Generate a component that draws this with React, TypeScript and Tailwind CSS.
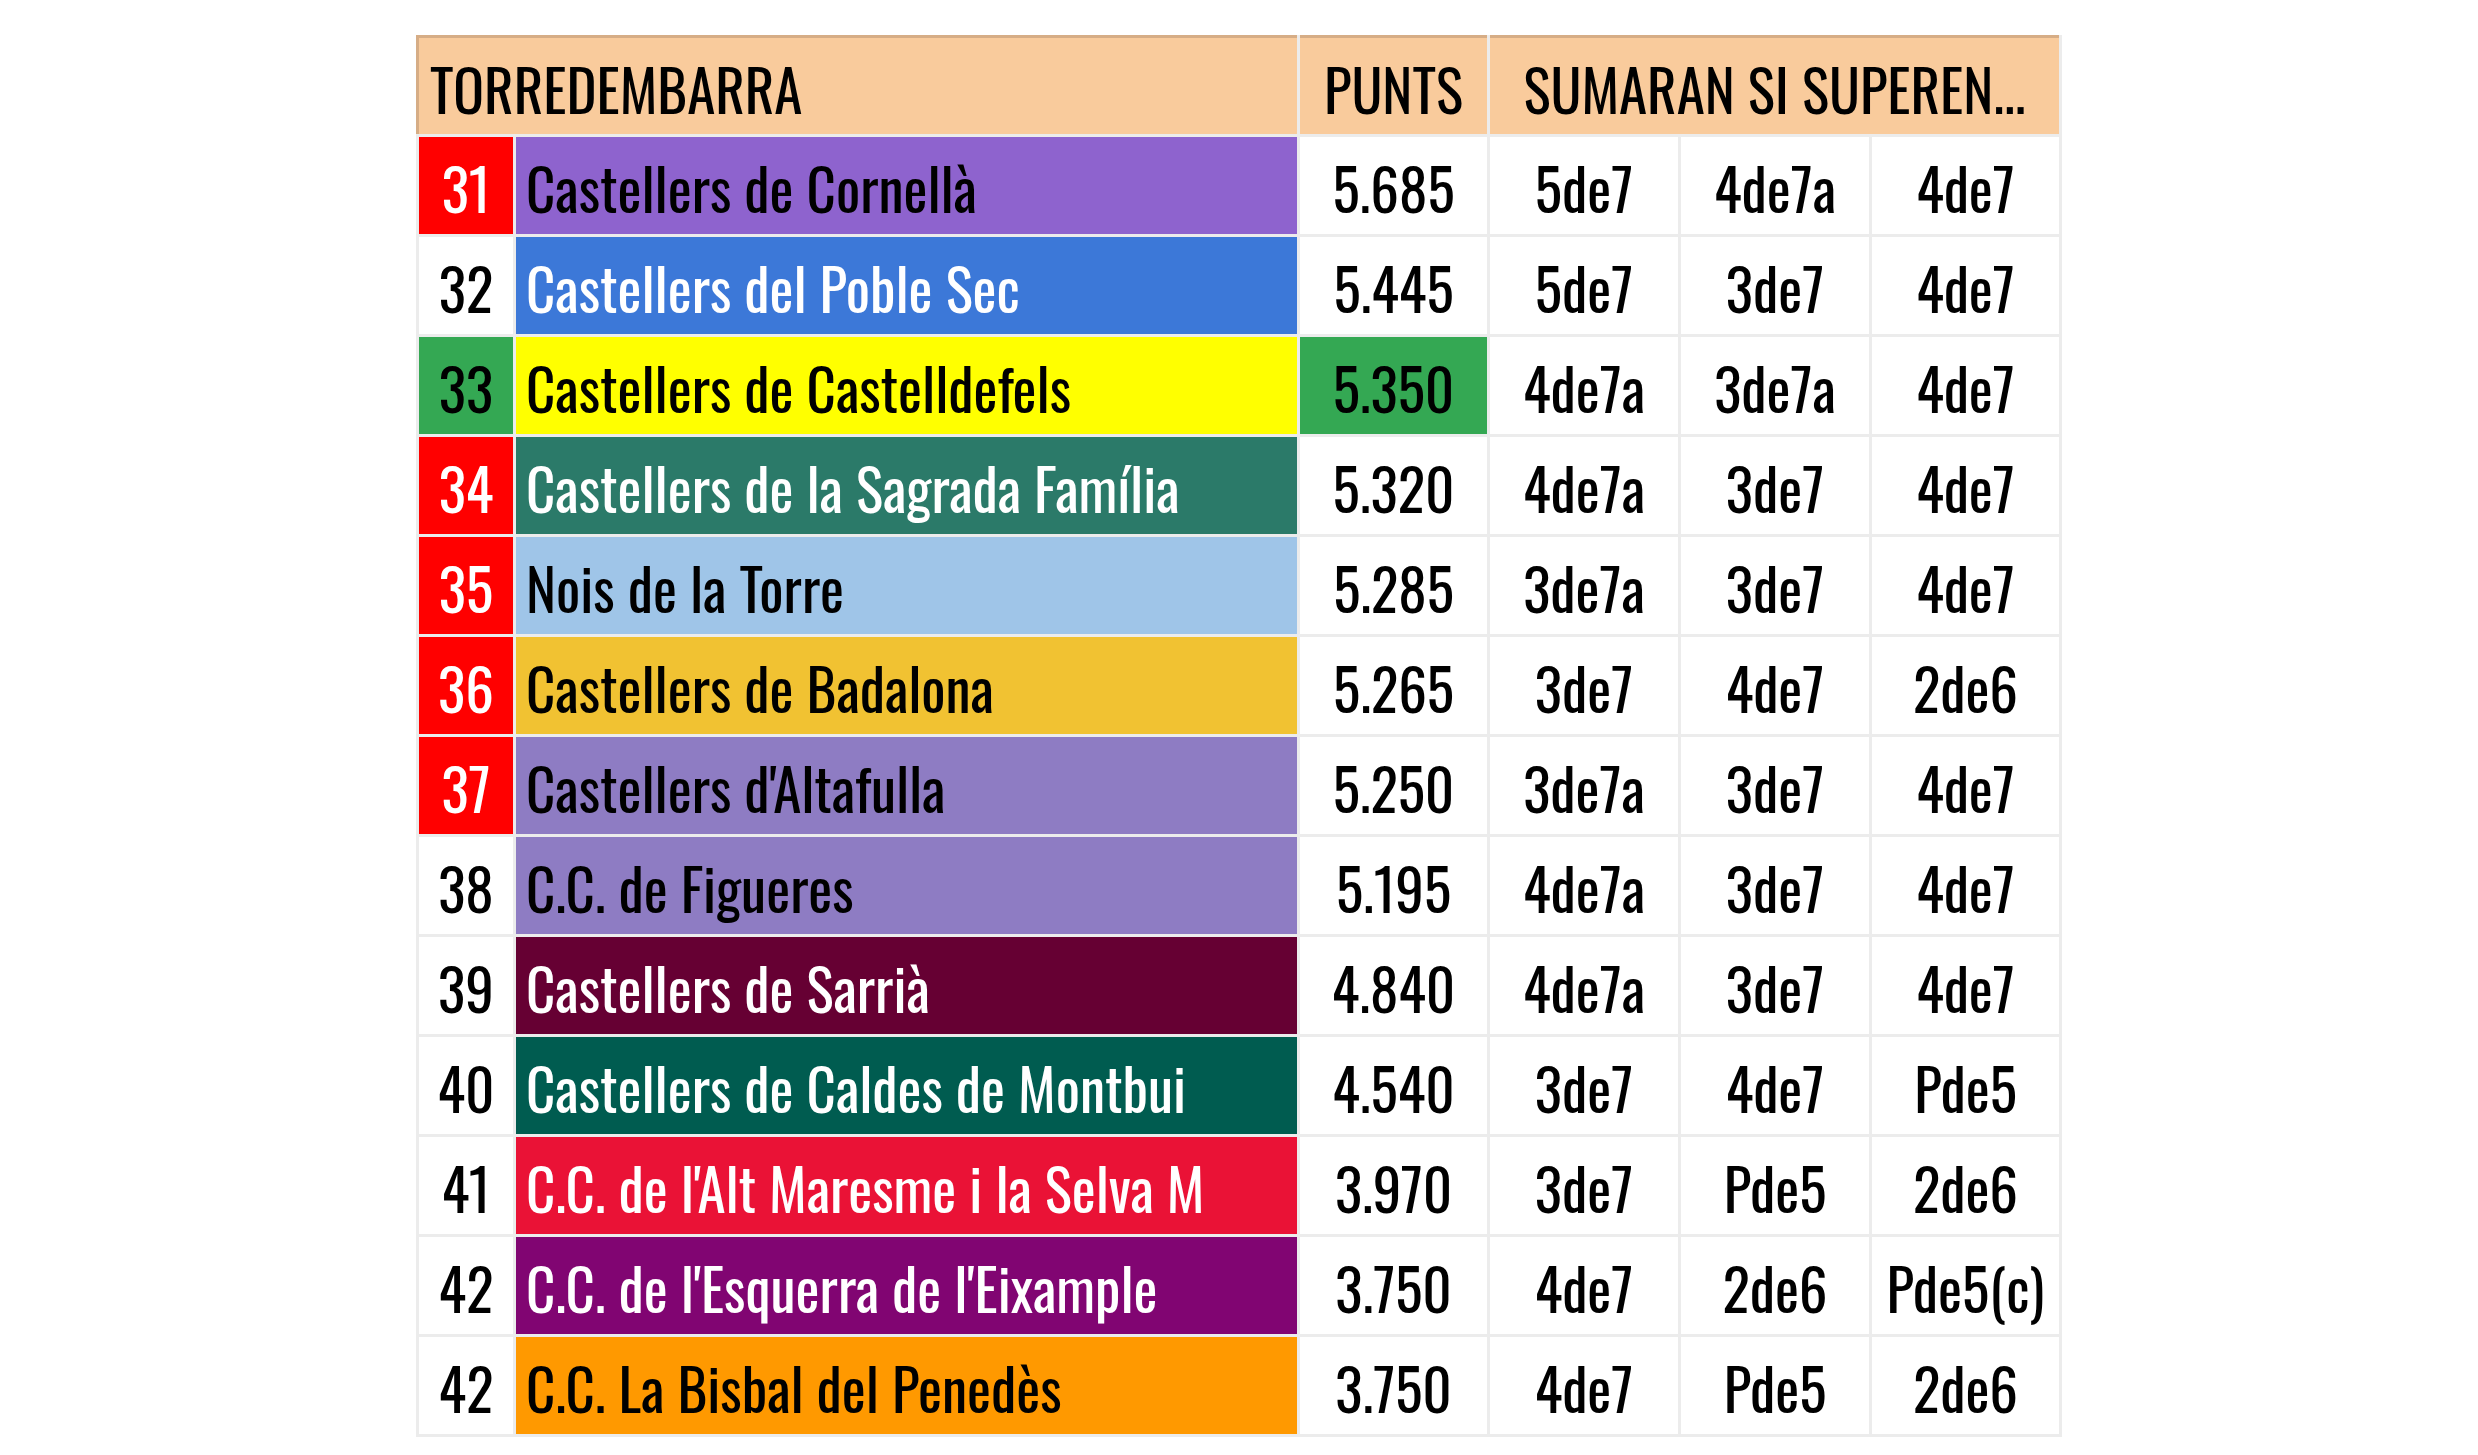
type Row = {
  pos: string;
  posCls: string;
  name: string;
  nameCls: string;
  punts: string;
  puntsCls?: string;
  sumes: [string, string, string];
};

const rows: Row[] = [
  { pos: '31', posCls: 'bg-[#ff0000] text-white', name: 'Castellers de Cornellà', nameCls: 'bg-[#8e63ce] text-black', punts: '5.685', sumes: ['5de7', '4de7a', '4de7'] },
  { pos: '32', posCls: 'bg-white text-black', name: 'Castellers del Poble Sec', nameCls: 'bg-[#3c78d8] text-white', punts: '5.445', sumes: ['5de7', '3de7', '4de7'] },
  { pos: '33', posCls: 'bg-[#34a853] text-black', name: 'Castellers de Castelldefels', nameCls: 'bg-[#ffff00] text-black', punts: '5.350', puntsCls: 'bg-[#34a853]', sumes: ['4de7a', '3de7a', '4de7'] },
  { pos: '34', posCls: 'bg-[#ff0000] text-white', name: 'Castellers de la Sagrada Família', nameCls: 'bg-[#2b7a69] text-white', punts: '5.320', sumes: ['4de7a', '3de7', '4de7'] },
  { pos: '35', posCls: 'bg-[#ff0000] text-white', name: 'Nois de la Torre', nameCls: 'bg-[#9fc5e8] text-black', punts: '5.285', sumes: ['3de7a', '3de7', '4de7'] },
  { pos: '36', posCls: 'bg-[#ff0000] text-white', name: 'Castellers de Badalona', nameCls: 'bg-[#f1c232] text-black', punts: '5.265', sumes: ['3de7', '4de7', '2de6'] },
  { pos: '37', posCls: 'bg-[#ff0000] text-white', name: "Castellers d'Altafulla", nameCls: 'bg-[#8e7cc3] text-black', punts: '5.250', sumes: ['3de7a', '3de7', '4de7'] },
  { pos: '38', posCls: 'bg-white text-black', name: 'C.C. de Figueres', nameCls: 'bg-[#8e7cc3] text-black', punts: '5.195', sumes: ['4de7a', '3de7', '4de7'] },
  { pos: '39', posCls: 'bg-white text-black', name: 'Castellers de Sarrià', nameCls: 'bg-[#660033] text-white', punts: '4.840', sumes: ['4de7a', '3de7', '4de7'] },
  { pos: '40', posCls: 'bg-white text-black', name: 'Castellers de Caldes de Montbui', nameCls: 'bg-[#005c50] text-white', punts: '4.540', sumes: ['3de7', '4de7', 'Pde5'] },
  { pos: '41', posCls: 'bg-white text-black', name: "C.C. de l'Alt Maresme i la Selva M", nameCls: 'bg-[#ea1236] text-white', punts: '3.970', sumes: ['3de7', 'Pde5', '2de6'] },
  { pos: '42', posCls: 'bg-white text-black', name: "C.C. de l'Esquerra de l'Eixample", nameCls: 'bg-[#810572] text-white', punts: '3.750', sumes: ['4de7', '2de6', 'Pde5(c)'] },
  { pos: '42', posCls: 'bg-white text-black', name: 'C.C. La Bisbal del Penedès', nameCls: 'bg-[#ff9900] text-black', punts: '3.750', sumes: ['4de7', 'Pde5', '2de6'] },
];

const cell = 'flex h-[97px] items-center whitespace-nowrap leading-none pt-[3px]';

export default function App() {
  return (
    <div className="min-h-screen bg-white font-['Oswald',_'Liberation_Sans',_sans-serif] text-[57px] text-black">
      <div className="ml-[416px] pt-[35px]">
        <div className="grid w-[1646px] grid-cols-[94px_781px_187px_188px_188px_187px] gap-[3px] bg-[#ececec] px-[3px] pb-[3px]">
          {/* capçalera */}
          <div className="col-span-2 -ml-[3px] flex h-[99px] items-center border-l-[3px] border-t-[3px] border-[#d6ad86] bg-[#f9cb9c] pl-[11px] pt-[4px] leading-none">
            TORREDEMBARRA
          </div>
          <div className="flex h-[99px] items-center justify-center border-t-[3px] border-[#d6ad86] bg-[#f9cb9c] pt-[4px] leading-none">
            PUNTS
          </div>
          <div className="col-span-3 flex h-[99px] items-center justify-center border-t-[3px] border-[#d6ad86] bg-[#f9cb9c] pt-[4px] leading-none">
            SUMARAN SI SUPEREN...
          </div>

          {rows.map((r, i) => (
            <div key={i} className="contents">
              <div className={`${cell} justify-center ${r.posCls}`}>{r.pos}</div>
              <div className={`${cell} pl-[10px] ${r.nameCls}`}>{r.name}</div>
              <div className={`${cell} justify-center ${r.puntsCls ?? 'bg-white'}`}>{r.punts}</div>
              {r.sumes.map((s, j) => (
                <div key={j} className={`${cell} justify-center bg-white`}>
                  {s}
                </div>
              ))}
            </div>
          ))}
        </div>
      </div>
    </div>
  );
}
